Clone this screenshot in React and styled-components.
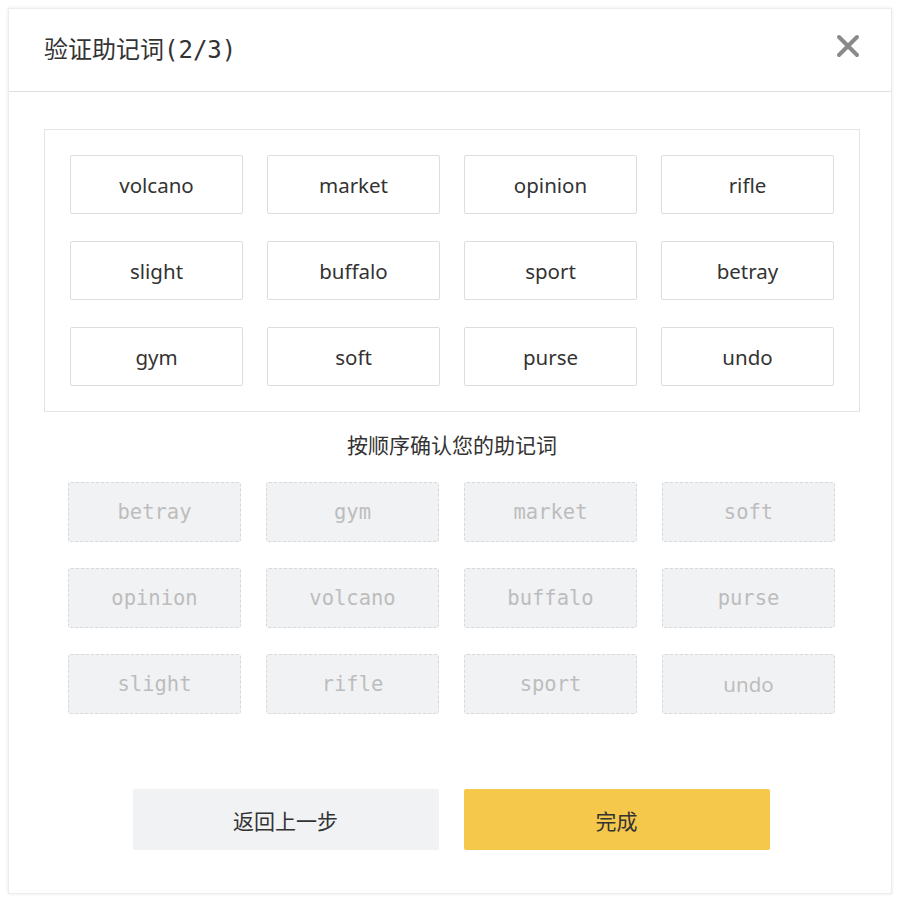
import React from "react";
import styled, { createGlobalStyle } from "styled-components";

const Global = createGlobalStyle`
  html, body { margin: 0; padding: 0; background: #ffffff; }
  body { padding: 8px; box-sizing: border-box; font-family: "Noto Sans", "Noto Sans CJK SC", sans-serif; color: #333; }
  * { box-sizing: border-box; }
`;

const Modal = styled.div`
  width: 884px;
  height: 886px;
  background: #fff;
  border: 1px solid #ececec;
  box-shadow: 0 0 3px rgba(0, 0, 0, 0.1);
  display: flex;
  flex-direction: column;
`;

const Header = styled.div`
  height: 83px;
  flex: none;
  display: flex;
  align-items: center;
  justify-content: space-between;
  padding: 0 31px 5px 35px;
  border-bottom: 1px solid #dedede;
`;

const Title = styled.h1`
  margin: 0;
  font-family: "DejaVu Sans Mono", "Noto Sans CJK SC", monospace;
  font-weight: 400;
  font-size: 24px;
  color: #333;
`;

const Close = styled.button`
  border: 0;
  background: none;
  padding: 0;
  width: 24px;
  height: 24px;
  display: flex;
  align-items: center;
  justify-content: center;
  margin-top: -4px;
  cursor: pointer;
`;

const Body = styled.div`
  flex: 1;
  display: flex;
  flex-direction: column;
  padding: 37px 31px 43px 35px;
`;

const WordBox = styled.div`
  border: 1px solid #e2e4e7;
  padding: 25px;
`;

const Grid = styled.div`
  display: grid;
  grid-template-columns: repeat(4, 173px);
  justify-content: space-between;
  row-gap: ${(p) => p.$rowGap}px;
`;

const Chip = styled.div`
  height: ${(p) => (p.$ghost ? 60 : 59)}px;
  display: flex;
  align-items: center;
  justify-content: center;
  border-radius: ${(p) => (p.$ghost ? 3 : 2)}px;
  border: 1px ${(p) => (p.$ghost ? "dashed #d5d9de" : "solid #dadde1")};
  background: ${(p) => (p.$ghost ? "#f1f2f4" : "#fff")};
  color: ${(p) => (p.$ghost ? "#bdbdbd" : "#333")};
  font-family: ${(p) =>
    p.$mono ? `"DejaVu Sans Mono", monospace` : `"Noto Sans", sans-serif`};
  font-size: 20.5px;
`;

const Hint = styled.div`
  margin: 17px 0 23px;
  text-align: center;
  font-family: "Noto Sans CJK SC", sans-serif;
  font-size: 21px;
  line-height: 30px;
  color: #333;
`;

const GhostArea = styled.div`
  padding: 0 25px 0 24px;
`;

const Actions = styled.div`
  margin-top: auto;
  display: flex;
  justify-content: center;
  gap: 25px;
  padding-right: 2px;
`;

const ActionButton = styled.button`
  width: 306px;
  height: 61px;
  border-radius: 2px;
  border: 0;
  background: ${(p) => (p.$primary ? "#f5c84b" : "#f1f2f4")};
  color: #333;
  font-family: "Noto Sans CJK SC", sans-serif;
  font-size: 21px;
  cursor: pointer;
`;

const chosen = [
  "volcano", "market", "opinion", "rifle",
  "slight", "buffalo", "sport", "betray",
  "gym", "soft", "purse", "undo",
];

const pool = [
  "betray", "gym", "market", "soft",
  "opinion", "volcano", "buffalo", "purse",
  "slight", "rifle", "sport", "undo",
];

export default function App() {
  return (
    <>
      <Global />
      <Modal>
        <Header>
          <Title>验证助记词(2/3)</Title>
          <Close aria-label="close">
            <svg width="24" height="24" viewBox="0 0 24 24">
              <path
                d="M3 3 L21 21 M21 3 L3 21"
                stroke="#8a8a8a"
                strokeWidth="4"
                strokeLinecap="round"
              />
            </svg>
          </Close>
        </Header>
        <Body>
          <WordBox>
            <Grid $rowGap={27}>
              {chosen.map((w) => (
                <Chip key={w}>{w}</Chip>
              ))}
            </Grid>
          </WordBox>
          <Hint>按顺序确认您的助记词</Hint>
          <GhostArea>
            <Grid $rowGap={26}>
              {pool.map((w) => (
                <Chip key={w} $ghost $mono={w !== "undo"}>
                  {w}
                </Chip>
              ))}
            </Grid>
          </GhostArea>
          <Actions>
            <ActionButton>返回上一步</ActionButton>
            <ActionButton $primary>完成</ActionButton>
          </Actions>
        </Body>
      </Modal>
    </>
  );
}
